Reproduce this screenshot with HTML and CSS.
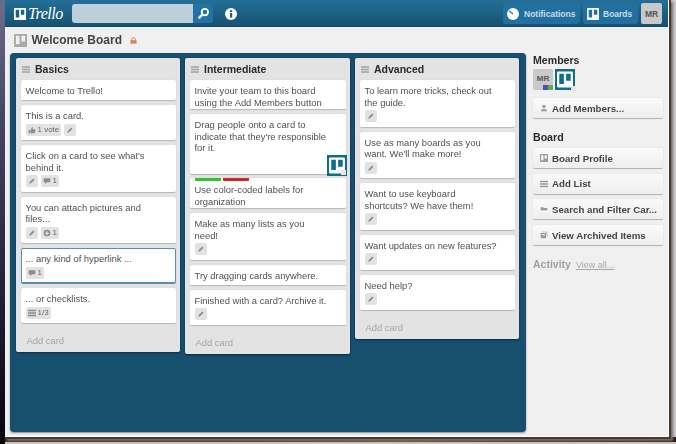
FILE: index.html
```html
<!DOCTYPE html>
<html lang="en">
<head>
<meta charset="utf-8">
<title>Welcome Board | Trello</title>
<link rel="stylesheet" href="styles.css">
</head>
<body>
<svg class="sprite" aria-hidden="true">
  <symbol id="i-board" viewBox="0 0 14 14"><path fill-rule="evenodd" d="M1 0h12a1 1 0 0 1 1 1v12a1 1 0 0 1-1 1H1a1 1 0 0 1-1-1V1a1 1 0 0 1 1-1zM2 2v9h4V2zm6 0v6h4V2z"/></symbol>
  <symbol id="i-pencil" viewBox="0 0 12 12"><path d="M2 10l.6-2.6L7.8 2.2l2 2-5.2 5.2z"/></symbol>
  <symbol id="i-comment" viewBox="0 0 12 12"><path d="M2 2h8a1 1 0 0 1 1 1v4a1 1 0 0 1-1 1H6l-3 2.5V8H2a1 1 0 0 1-1-1V3a1 1 0 0 1 1-1z"/></symbol>
  <symbol id="i-lines" viewBox="0 0 12 10"><path d="M0 0h12v2.3H0zM0 3.8h12v2.3H0zM0 7.7h12V10H0z"/></symbol>
</svg>
<div class="window">
  <header class="topbar">
    <div class="brand">
      <svg class="brand-mark"><use href="#i-board"/></svg>
      <span class="brand-name">Trello</span>
    </div>
    <div class="search">
      <div class="search-field"></div>
      <div class="search-btn">
        <svg class="search-icon" viewBox="0 0 14 14"><circle cx="8.5" cy="5.5" r="3.5" fill="none" stroke="#fff" stroke-width="2"/><path d="M6 8l-3.5 3.5" stroke="#fff" stroke-width="2.6" stroke-linecap="round"/></svg>
      </div>
    </div>
    <svg class="info" viewBox="0 0 12 12"><circle cx="6" cy="6" r="6" fill="#fff"/><rect x="5" y="5" width="2.2" height="4.6" fill="#1b5d80"/><rect x="5" y="2.2" width="2.2" height="1.9" fill="#1b5d80"/></svg>
    <div class="top-actions">
      <div class="top-btn notif">
        <svg class="top-icon" viewBox="0 0 12 12"><circle cx="6" cy="6" r="6" fill="#fff"/><path d="M6 6L1.8 2.6" stroke="#2270a0" stroke-width="1.2"/></svg>
        <span>Notifications</span>
      </div>
      <div class="top-btn boards">
        <svg class="top-icon white"><use href="#i-board"/></svg>
        <span>Boards</span>
      </div>
      <div class="me">MR</div>
    </div>
  </header>

  <div class="title-row">
    <svg class="title-icon"><use href="#i-board"/></svg>
    <h1>Welcome Board</h1>
    <svg class="lock" viewBox="0 0 8 8"><path fill="none" stroke="#d9805a" stroke-width="1.1" d="M2 4V2.6a2 2 0 0 1 4 0V4"/><rect y="3.6" x="0.5" width="7" height="4" fill="#d9805a"/></svg>
  </div>

  <main class="main">
    <section class="board">
      <div class="list">
        <div class="list-head"><svg class="list-menu"><use href="#i-lines"/></svg><h2>Basics</h2></div>
        <div class="card">Welcome to Trello!</div>
        <div class="card">This is a card.
          <div class="badges">
            <span class="badge"><svg class="b-ic" viewBox="0 0 12 12"><path d="M1 6h2.4v5H1zM4 6l2-4.5c1 0 1.4.8 1.2 1.7L7 5h3.4c.7 0 1 .6.8 1.2L10 10.4c-.1.4-.4.6-.8.6H4z"/></svg>1 vote</span>
            <span class="badge"><svg class="b-ic"><use href="#i-pencil"/></svg></span>
          </div>
        </div>
        <div class="card">Click on a card to see what's behind it.
          <div class="badges">
            <span class="badge"><svg class="b-ic"><use href="#i-pencil"/></svg></span>
            <span class="badge"><svg class="b-ic"><use href="#i-comment"/></svg>1</span>
          </div>
        </div>
        <div class="card">You can attach pictures and files...
          <div class="badges">
            <span class="badge"><svg class="b-ic"><use href="#i-pencil"/></svg></span>
            <span class="badge"><svg class="b-ic" viewBox="0 0 12 12"><path fill-rule="evenodd" d="M6 1a5 5 0 1 1 0 10A5 5 0 0 1 6 1zM5 3.5v2H3v1.6h2v2h2v-2h2V5.500H7v-2z"/></svg>1</span>
          </div>
        </div>
        <div class="card focused">... any kind of hyperlink ...
          <div class="badges">
            <span class="badge"><svg class="b-ic"><use href="#i-comment"/></svg>1</span>
          </div>
        </div>
        <div class="card">... or checklists.
          <div class="badges">
            <span class="badge"><svg class="b-ic"><use href="#i-lines"/></svg>1/3</span>
          </div>
        </div>
        <div class="add-card">Add card</div>
      </div>

      <div class="list wide">
        <div class="list-head"><svg class="list-menu"><use href="#i-lines"/></svg><h2>Intermediate</h2></div>
        <div class="card tight">Invite your team to this board using the Add Members button</div>
        <div class="card has-member">Drag people onto a card to indicate that they're responsible for it.
          <div class="card-member">
            <svg class="logo-avatar"><use href="#i-board"/></svg>
          </div>
        </div>
        <div class="card tight labelled">
          <div class="labels"><span class="label green"></span><span class="label red"></span></div>
          Use color-coded labels for organization
        </div>
        <div class="card">Make as many lists as you<br>need!
          <div class="badges"><span class="badge"><svg class="b-ic"><use href="#i-pencil"/></svg></span></div>
        </div>
        <div class="card">Try dragging cards anywhere.</div>
        <div class="card">Finished with a card? Archive it.
          <div class="badges"><span class="badge"><svg class="b-ic"><use href="#i-pencil"/></svg></span></div>
        </div>
        <div class="add-card">Add card</div>
      </div>

      <div class="list">
        <div class="list-head"><svg class="list-menu"><use href="#i-lines"/></svg><h2>Advanced</h2></div>
        <div class="card">To learn more tricks, check out the guide.
          <div class="badges"><span class="badge"><svg class="b-ic"><use href="#i-pencil"/></svg></span></div>
        </div>
        <div class="card">Use as many boards as you want. We'll make more!
          <div class="badges"><span class="badge"><svg class="b-ic"><use href="#i-pencil"/></svg></span></div>
        </div>
        <div class="card">Want to use keyboard shortcuts? We have them!
          <div class="badges"><span class="badge"><svg class="b-ic"><use href="#i-pencil"/></svg></span></div>
        </div>
        <div class="card">Want updates on new features?
          <div class="badges"><span class="badge"><svg class="b-ic"><use href="#i-pencil"/></svg></span></div>
        </div>
        <div class="card">Need help?
          <div class="badges"><span class="badge"><svg class="b-ic"><use href="#i-pencil"/></svg></span></div>
        </div>
        <div class="add-card">Add card</div>
      </div>
    </section>

    <aside class="side">
      <h3>Members</h3>
      <div class="members">
        <div class="member-mr">MR<span class="mini"><i class="mini-a"></i><i class="mini-b"></i></span></div>
        <div class="member-logo"><svg class="logo-avatar"><use href="#i-board"/></svg></div>
      </div>
      <button class="side-btn"><svg class="s-ic" viewBox="0 0 12 12"><circle cx="6" cy="3.500" r="2.500"/><path d="M1.500 11c0-3 2-4 4.500-4s4.500 1 4.500 4z"/></svg>Add Members...</button>
      <h3 class="board-head">Board</h3>
      <div class="side-stack">
        <button class="side-btn"><svg class="s-ic"><use href="#i-board"/></svg>Board Profile</button>
        <button class="side-btn"><svg class="s-ic"><use href="#i-lines"/></svg>Add List</button>
        <button class="side-btn"><svg class="s-ic" viewBox="0 0 12 12"><path d="M1 3.500h4l1 1h5v3.500H1z"/></svg>Search and Filter Car...</button>
        <button class="side-btn"><svg class="s-ic" viewBox="0 0 12 12"><path fill-rule="evenodd" d="M3 1h8v8h-1V2H3zM1 3h8v8H1zm1.500 2v1.200h5V5z"/></svg>View Archived Items</button>
      </div>
      <div class="activity"><strong>Activity</strong><a>View all...</a></div>
    </aside>
  </main>
</div>
</body>
</html>
```
FILE: styles.css
```css
* { box-sizing: border-box; }
html, body { margin: 0; height: 100%; }
body {
  width: 676px;
  height: 444px;
  overflow: hidden;
  font-family: "Liberation Sans", Arial, sans-serif;
  background-color: #c8c8c8;
  background-image:
    linear-gradient(#6d6d8c 0, #4a4668 25%, #2c2440 60%, #0d0d1a 90%, #05050c 100%),
    linear-gradient(90deg, #3a2a1c, #4a3020 30%, #6a4a32 60%, #2a1c12);
  background-size: 5px 100%, 100% 5px;
  background-position: 0 0, 0 437px;
  background-repeat: no-repeat;
}
.sprite { position: absolute; width: 0; height: 0; }
h1, h2, h3 { margin: 0; }

.window {
  margin-left: 5px;
  width: 664px;
  height: 437px;
  background: #f0f0f0;
  border-bottom: 1px solid #fff;
  border-right: 1px solid #fff;
  box-shadow: 1px 1px 0 1px #4a382a, 3px 3px 2px 1px #7a7068;
  position: relative;
  filter: blur(0.3px);
}

/* top bar */
.topbar {
  height: 27px;
  display: flex;
  align-items: center;
  background: linear-gradient(#246f98, #165272 95%, #134866);
  padding-left: 9px;
}
.brand { display: flex; align-items: center; width: 58px; }
.brand-mark { width: 12px; height: 12px; fill: #fff; }
.brand-name {
  font-family: "Liberation Serif", serif;
  font-style: italic;
  font-size: 16px;
  letter-spacing: -0.5px;
  color: #fff;
  margin-left: 2px;
  line-height: 20px;
}
.search { display: flex; height: 19px; border-radius: 3px; overflow: hidden; margin-top: -1px; }
.search-field { width: 121px; background: #bccfdb; }
.search-btn { width: 20px; background: #2273a3; display: flex; align-items: center; justify-content: center; }
.search-icon { width: 13px; height: 13px; }
.info { width: 12px; height: 12px; margin-left: 12px; }
.top-actions { margin-left: auto; display: flex; gap: 3px; padding-right: 6px; align-items: center; }
.top-btn {
  height: 21px;
  display: flex;
  align-items: center;
  background: #22709f;
  border-radius: 3px;
  color: #c9dde8;
  font-size: 8.500px;
  font-weight: bold;
  padding-left: 4px;
}
.notif { width: 77px; gap: 5px; }
.boards { width: 55px; gap: 4px; }
.top-icon { width: 12px; height: 12px; flex: none; }
.top-icon.white { fill: #fff; }
.me {
  width: 21px;
  height: 21px;
  background: #c9c9c9;
  border-radius: 2px;
  color: #555;
  font-size: 8.500px;
  font-weight: bold;
  display: flex;
  align-items: center;
  justify-content: center;
}

/* title */
.title-row { height: 26px; display: flex; align-items: center; padding-left: 8.500px; }
.title-icon { width: 13px; height: 13px; fill: #a8a8a8; }
.title-row h1 { font-size: 12px; color: #444; margin-left: 5px; }
.lock { width: 7px; height: 7px; margin-left: 8px; }

/* board */
.main { display: flex; padding-left: 5px; }
.board {
  width: 516px;
  height: 379px;
  background: #174f6e;
  border-radius: 4px;
  box-shadow: 0 1px 2px #888;
  padding: 5px 6px;
  display: flex;
  align-items: flex-start;
  gap: 5px;
}
.list {
  width: 164px;
  background: #e3e3e3;
  border-radius: 2px;
  padding: 0 4.500px;
  box-shadow: 0 1px 2px #0c2c40;
}
.list.wide { width: 165px; }
.list-head { height: 22px; display: flex; align-items: center; padding-left: 1.500px; }
.list-menu { width: 8px; height: 7px; fill: #a3a3a3; }
.list-head h2 { font-size: 10.500px; color: #2a2a2a; margin-left: 5px; }

.card {
  background: #fff;
  border-radius: 2px;
  border-bottom: 1px solid #bbb;
  box-shadow: 0 0 1px #c4c4c4;
  padding: 5px 14px 3.500px 5px;
  margin-bottom: 4px;
  font-size: 9.400px;
  line-height: 11.500px;
  color: #505050;
  position: relative;
}
.card.tight { padding-bottom: 1px; }
.card.focused { box-shadow: inset 0 0 0 1px #5a8fab; border-bottom: 1px solid #5a8fab; }
.card.has-member { padding-bottom: 20px; margin-bottom: 3px; }
.card.labelled { padding-top: 3px; }

.labels { display: flex; gap: 2px; margin-bottom: 3.500px; margin-top: -3px; }
.label { width: 26px; height: 3px; border-radius: 0 0 1px 1px; }
.green { background: #2fc42f; }
.red { background: #c8282d; }

.card-member {
  position: absolute;
  right: -1px;
  bottom: -2px;
  width: 20px;
  height: 21px;
  background: #0d6d8c;
  border: 2px solid #0d6d8c;
  display: flex;
}
.logo-avatar { width: 100%; height: 100%; fill: #fff; }
.card-member::after, .member-logo::after {
  content: "";
  position: absolute;
  right: -1px;
  bottom: -1px;
  width: 5px;
  height: 5px;
  background: #e6e6e6;
}

.badges { display: flex; gap: 3px; margin: 2px 0 1px; }
.badge {
  height: 12px;
  min-width: 12px;
  padding: 0 2px;
  background: #e2e2e2;
  border-radius: 2px;
  display: inline-flex;
  align-items: center;
  gap: 2px;
  font-size: 8px;
  color: #666;
}
.b-ic { width: 8px; height: 8px; fill: #8c8c8c; }

.add-card {
  height: 24px;
  font-size: 9.400px;
  color: #a5a5a5;
  padding: 7px 0 0 6px;
  line-height: 12px;
}

/* sidebar */
.side { margin-left: 7px; width: 130px; }
.side h3 { font-size: 10.600px; color: #2a2a2a; line-height: 14px; }
.members { display: flex; gap: 2px; margin-top: 2px; }
.member-mr {
  width: 20px;
  height: 21px;
  background: #c9c9c9;
  border-radius: 2px;
  font-size: 8px;
  font-weight: bold;
  color: #555;
  position: relative;
  text-align: center;
  line-height: 20px;
}
.mini { position: absolute; right: 0; bottom: 0; display: flex; height: 5px; }
.mini-a { width: 5px; background: #5050b0; }
.mini-b { width: 5px; background: #58b050; }
.member-logo {
  width: 20px;
  height: 21px;
  background: #0d6d8c;
  padding: 2px;
  position: relative;
}
.side-btn {
  width: 130px;
  height: 21px;
  background: linear-gradient(#fafafa, #eeeeee);
  border: 0;
  border-bottom: 1px solid #b5b5b5;
  border-radius: 2px;
  box-shadow: 0 0 1px #bbb;
  display: flex;
  align-items: center;
  gap: 4px;
  padding: 0 0 0 7px;
  font-family: inherit;
  font-size: 9.700px;
  font-weight: bold;
  color: #444;
  margin: 0;
  white-space: nowrap;
}
.members + .side-btn { margin-top: 8px; }
.s-ic { width: 8px; height: 8px; fill: #9a9a9a; flex: none; }
.board-head { margin-top: 11px; }
.side-stack { display: flex; flex-direction: column; gap: 4.700px; margin-top: 4px; }
.activity { margin-top: 12px; display: flex; align-items: baseline; gap: 5px; }
.activity strong { font-size: 10.500px; color: #a0a0a0; }
.activity a { font-size: 9px; color: #a8a8a8; text-decoration: underline; }
```
